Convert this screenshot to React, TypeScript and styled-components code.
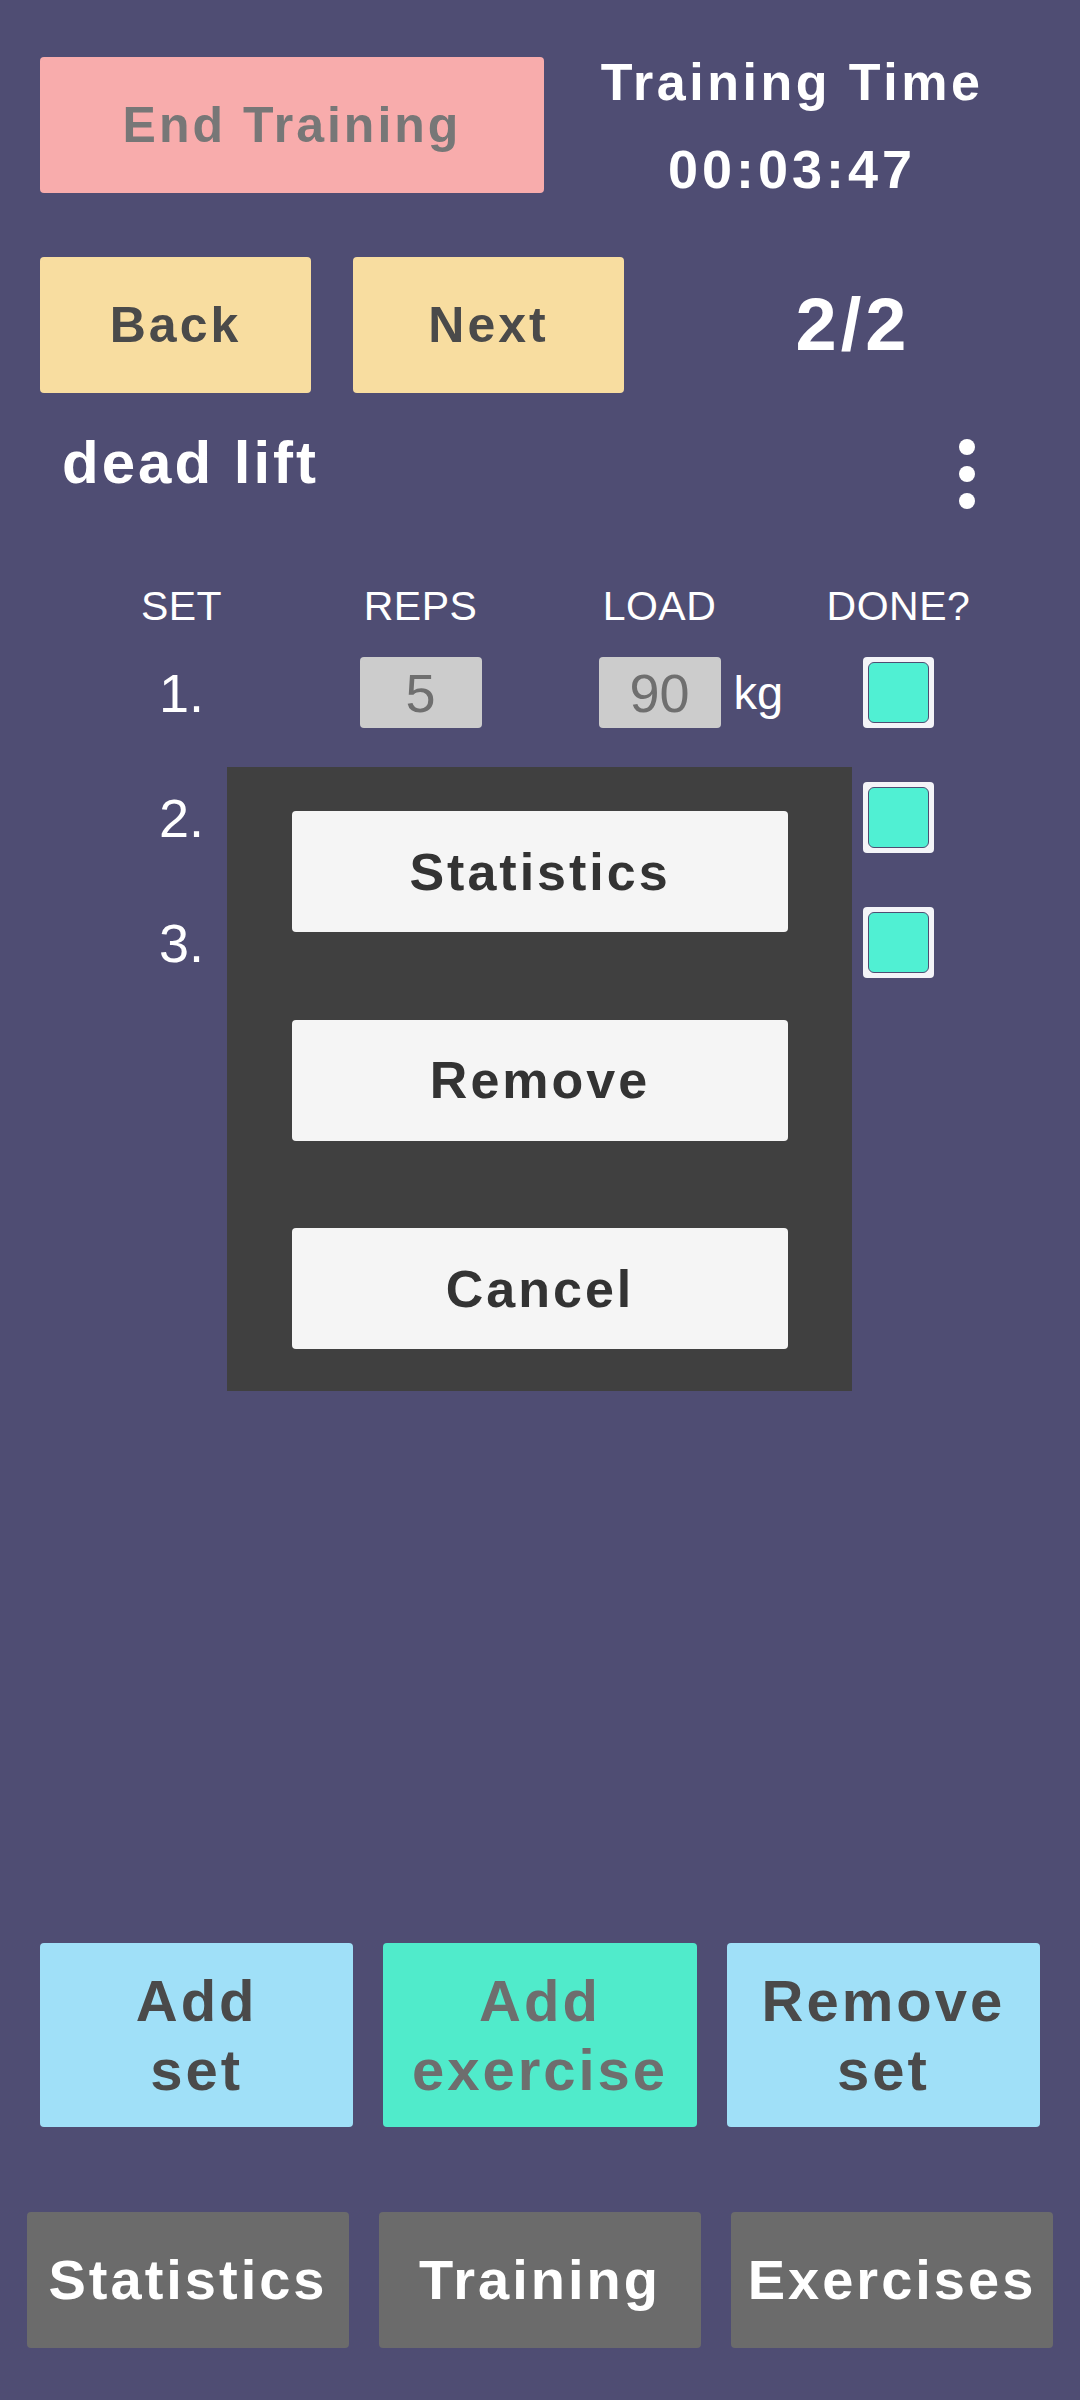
import React from "react";
import styled, { createGlobalStyle } from "styled-components";

const Global = createGlobalStyle`
  html, body {
    margin: 0;
    padding: 0;
    background: #4f4d73;
  }
  body {
    font-family: "Liberation Sans", Arial, sans-serif;
  }
  * { box-sizing: border-box; }
`;

const Page = styled.div`
  position: relative;
  width: 1080px;
  height: 2400px;
  background: #4f4d73;
  display: flex;
  flex-direction: column;
  font-family: "Liberation Sans", Arial, sans-serif;
  overflow: hidden;
`;

const TopRow = styled.div`
  display: flex;
  align-items: flex-start;
  height: 136px;
  padding: 0 40px;
  margin-top: 57px;
`;

const Button = styled.div<{ $bg: string; $fg: string; $w?: number; $h?: number; $size?: number }>`
  display: flex;
  align-items: center;
  justify-content: center;
  text-align: center;
  flex: none;
  width: ${(p) => (p.$w ? `${p.$w}px` : "auto")};
  height: ${(p) => (p.$h ? `${p.$h}px` : "auto")};
  background: ${(p) => p.$bg};
  color: ${(p) => p.$fg};
  border-radius: 4px;
  font-weight: 700;
  font-size: ${(p) => p.$size ?? 50}px;
  letter-spacing: 3px;
  line-height: 1;
`;

const TimeBlock = styled.div`
  flex: 1;
  display: flex;
  flex-direction: column;
  align-items: center;
  color: #ffffff;
  font-weight: 700;
`;

const TimeTitle = styled.div`
  font-size: 52px;
  line-height: 48px;
  letter-spacing: 3.5px;
  margin-top: 1px;
`;

const TimeValue = styled.div`
  font-size: 54px;
  line-height: 60px;
  letter-spacing: 4px;
  margin-top: 33px;
`;

const NavRow = styled.div`
  display: flex;
  align-items: center;
  gap: 42px;
  padding: 0 40px;
  margin-top: 64px;
`;

const Counter = styled.div`
  flex: 1;
  text-align: center;
  color: #ffffff;
  font-weight: 700;
  font-size: 74px;
  letter-spacing: 4px;
  line-height: 1;
`;

const TitleRow = styled.div`
  display: flex;
  align-items: flex-start;
  justify-content: space-between;
  height: 72px;
  padding: 0 105px 0 62px;
  margin-top: 34px;
`;

const Title = styled.div`
  color: #ffffff;
  font-weight: 700;
  font-size: 60px;
  line-height: 72px;
  letter-spacing: 3px;
`;

const Dots = styled.div`
  display: flex;
  flex-direction: column;
  gap: 11px;
  margin-top: 12px;
`;

const Dot = styled.span`
  width: 16px;
  height: 16px;
  border-radius: 50%;
  background: #ffffff;
`;

const Table = styled.div`
  display: flex;
  flex-direction: column;
  gap: 54px;
  padding: 0 62px;
  margin-top: 83px;
`;

const HeaderRow = styled.div`
  display: grid;
  grid-template-columns: repeat(4, 1fr);
  margin-bottom: -27px;
`;

const HeaderCell = styled.div`
  color: #ffffff;
  text-align: center;
  font-size: 41px;
  line-height: 48px;
  letter-spacing: 0.5px;
`;

const SetRow = styled.div`
  display: grid;
  grid-template-columns: repeat(4, 1fr);
  align-items: center;
  height: 71px;
`;

const NumCell = styled.div`
  color: #ffffff;
  text-align: center;
  font-size: 54px;
  line-height: 1;
`;

const InputCell = styled.div`
  display: grid;
  grid-template-columns: minmax(0, 1fr) auto minmax(0, 1fr);
  align-items: center;
`;

const ValueBox = styled.div`
  grid-column: 2;
  width: 122px;
  height: 71px;
  border-radius: 4px;
  background: #cccccc;
  color: #6f6f6f;
  font-size: 54px;
  display: flex;
  align-items: center;
  justify-content: center;
  line-height: 1;
`;

const Unit = styled.span`
  grid-column: 3;
  justify-self: start;
  margin-left: 13px;
  color: #ffffff;
  font-size: 47px;
  white-space: nowrap;
  line-height: 1;
`;

const CheckCell = styled.div`
  display: flex;
  justify-content: center;
`;

const CheckOuter = styled.div`
  width: 71px;
  height: 71px;
  padding: 5px;
  border-radius: 4px;
  background: #f4f4f8;
`;

const CheckInner = styled.div`
  width: 100%;
  height: 100%;
  border: 1.5px solid #4f4d73;
  border-radius: 6px;
  background: #50f0d3;
`;

const Spacer = styled.div`
  flex: 1;
`;

const ActionRow = styled.div`
  display: grid;
  grid-template-columns: repeat(3, 1fr);
  gap: 30px;
  padding: 0 40px;
`;

const ActionButton = styled.div<{ $bg: string; $fg: string }>`
  height: 184px;
  border-radius: 4px;
  background: ${(p) => p.$bg};
  color: ${(p) => p.$fg};
  display: flex;
  align-items: center;
  justify-content: center;
  text-align: center;
  font-weight: 700;
  font-size: 58px;
  line-height: 69px;
  letter-spacing: 3px;
`;

const BottomNav = styled.div`
  display: grid;
  grid-template-columns: repeat(3, 1fr);
  gap: 30px;
  padding: 0 27px;
  margin-top: 85px;
  margin-bottom: 52px;
`;

const NavButton = styled.div`
  height: 136px;
  border-radius: 4px;
  background: #6b6b6b;
  color: #ffffff;
  display: flex;
  align-items: center;
  justify-content: center;
  font-weight: 700;
  font-size: 56px;
  letter-spacing: 3px;
  line-height: 1;
`;

const Modal = styled.div`
  position: absolute;
  top: 767px;
  left: 227px;
  width: 625px;
  height: 624px;
  background: #404040;
  padding: 44px 64px 42px 65px;
  display: flex;
  flex-direction: column;
  justify-content: space-between;
`;

const ModalButton = styled.div`
  height: 121px;
  border-radius: 4px;
  background: #f5f5f5;
  color: #333333;
  display: flex;
  align-items: center;
  justify-content: center;
  font-weight: 700;
  font-size: 52px;
  letter-spacing: 3px;
  line-height: 1;
`;

const sets = [
  { n: 1, reps: 5, load: 90, visible: true },
  { n: 2, reps: 5, load: 90, visible: false },
  { n: 3, reps: 5, load: 90, visible: false },
];

export default function App() {
  return (
    <>
      <Global />
      <Page>
        <TopRow>
          <Button $bg="#f8acac" $fg="#777777" $w={504} $h={136}>
            End Training
          </Button>
          <TimeBlock>
            <TimeTitle>Training Time</TimeTitle>
            <TimeValue>00:03:47</TimeValue>
          </TimeBlock>
        </TopRow>

        <NavRow>
          <Button $bg="#f8dda0" $fg="#4a4a4a" $w={271} $h={136}>
            Back
          </Button>
          <Button $bg="#f8dda0" $fg="#4a4a4a" $w={271} $h={136}>
            Next
          </Button>
          <Counter>2/2</Counter>
        </NavRow>

        <TitleRow>
          <Title>dead lift</Title>
          <Dots>
            <Dot />
            <Dot />
            <Dot />
          </Dots>
        </TitleRow>

        <Table>
          <HeaderRow>
            <HeaderCell>SET</HeaderCell>
            <HeaderCell>REPS</HeaderCell>
            <HeaderCell>LOAD</HeaderCell>
            <HeaderCell>DONE?</HeaderCell>
          </HeaderRow>
          {sets.map((s) => (
            <SetRow key={s.n}>
              <NumCell>{s.n}.</NumCell>
              <InputCell>{s.visible && <ValueBox>{s.reps}</ValueBox>}</InputCell>
              <InputCell>
                {s.visible && (
                  <>
                    <ValueBox>{s.load}</ValueBox>
                    <Unit>kg</Unit>
                  </>
                )}
              </InputCell>
              <CheckCell>
                <CheckOuter>
                  <CheckInner />
                </CheckOuter>
              </CheckCell>
            </SetRow>
          ))}
        </Table>

        <Spacer />

        <ActionRow>
          <ActionButton $bg="#a0e0f8" $fg="#4a4a4a">
            Add
            <br />
            set
          </ActionButton>
          <ActionButton $bg="#50ebcb" $fg="#6e6e6e">
            Add
            <br />
            exercise
          </ActionButton>
          <ActionButton $bg="#a0e0f8" $fg="#4a4a4a">
            Remove
            <br />
            set
          </ActionButton>
        </ActionRow>

        <BottomNav>
          <NavButton>Statistics</NavButton>
          <NavButton>Training</NavButton>
          <NavButton>Exercises</NavButton>
        </BottomNav>

        <Modal>
          <ModalButton>Statistics</ModalButton>
          <ModalButton>Remove</ModalButton>
          <ModalButton>Cancel</ModalButton>
        </Modal>
      </Page>
    </>
  );
}
